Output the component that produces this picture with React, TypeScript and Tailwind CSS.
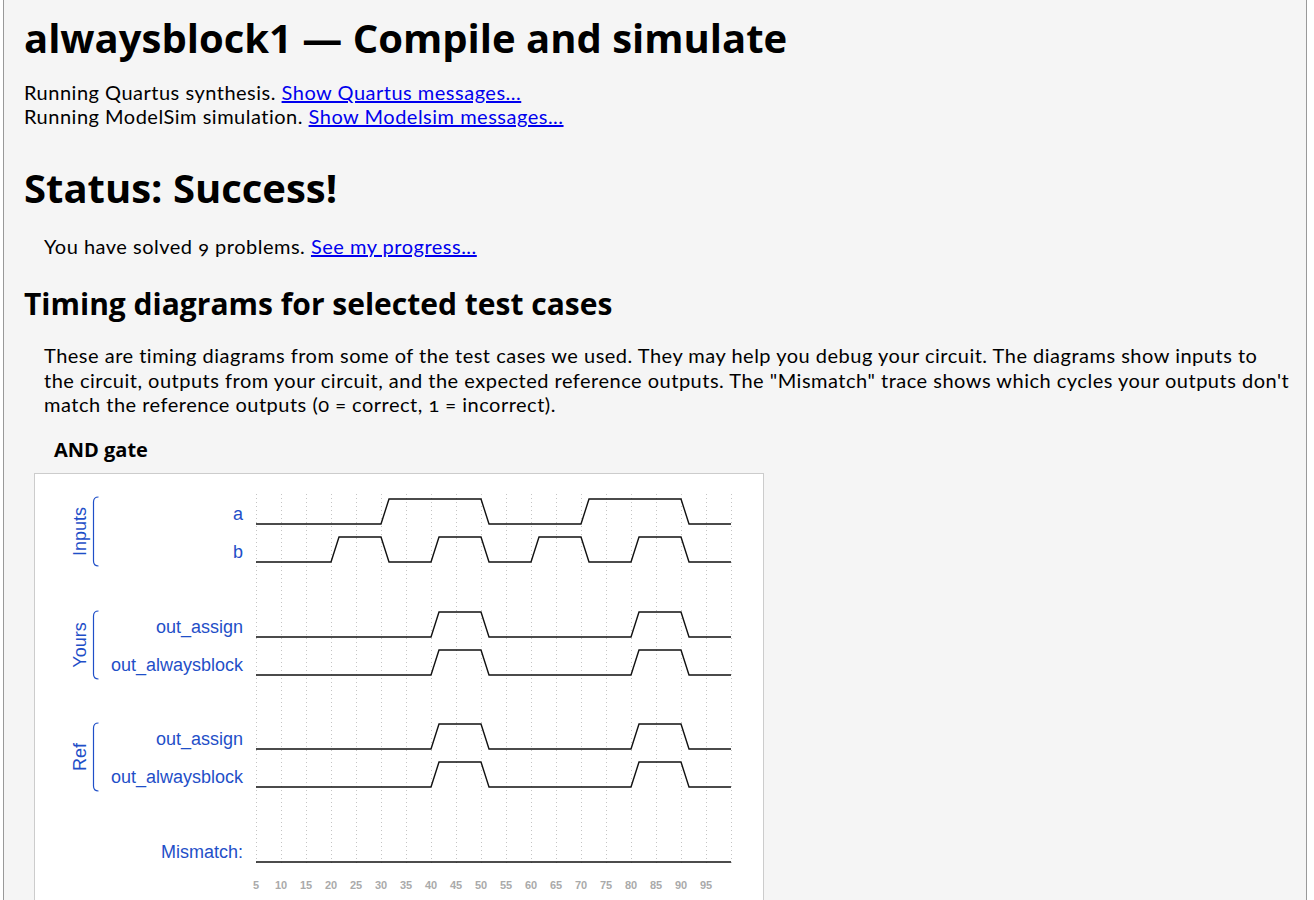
const BLUE = "#1f4fc8";

const x = (t: number) => 256 + (t - 5) * 5;

type Sig = { label: string; low: number; edges: number[] };

const hi = (low: number) => low - 25;

function wavePath(low: number, edges: number[]) {
  let level = 0;
  let d = `M${x(5)},${low}`;
  for (const t of edges) {
    const y0 = level ? hi(low) : low;
    const y1 = level ? low : hi(low);
    d += ` L${x(t)},${y0} L${x(t) + 8},${y1}`;
    level = 1 - level;
  }
  d += ` L${x(100)},${level ? hi(low) : low}`;
  return d;
}

const signals: Sig[] = [
  { label: "a", low: 524, edges: [30, 50, 70, 90] },
  { label: "b", low: 562, edges: [20, 30, 40, 50, 60, 70, 80, 90] },
  { label: "out_assign", low: 637, edges: [40, 50, 80, 90] },
  { label: "out_alwaysblock", low: 675, edges: [40, 50, 80, 90] },
  { label: "out_assign", low: 749, edges: [40, 50, 80, 90] },
  { label: "out_alwaysblock", low: 787, edges: [40, 50, 80, 90] },
  { label: "Mismatch:", low: 862, edges: [] },
];

const groups = [
  { name: "Inputs", top: 497, bottom: 566 },
  { name: "Yours", top: 611, bottom: 679 },
  { name: "Ref", top: 723, bottom: 791 },
];

const ticks = Array.from({ length: 19 }, (_, i) => 5 + i * 5);
const grid = Array.from({ length: 20 }, (_, i) => 5 + i * 5);

function TimingDiagram() {
  return (
    <svg
      width={728}
      height={440}
      viewBox="35 474 728 440"
      className="block"
      style={{ fontFamily: '"Liberation Sans", Arial, sans-serif' }}
    >
      {grid.map((t) => (
        <line
          key={t}
          x1={x(t) + 0.5}
          x2={x(t) + 0.5}
          y1={494}
          y2={866}
          stroke="#c4c4c4"
          strokeWidth={1}
          strokeDasharray="1 3"
        />
      ))}

      {groups.map((g) => {
        const mid = (g.top + g.bottom) / 2;
        return (
          <g key={g.name}>
            <path
              d={`M98.5,${g.top} Q93.5,${g.top} 93.5,${g.top + 5} L93.5,${g.bottom - 5} Q93.5,${g.bottom} 98.5,${g.bottom}`}
              fill="none"
              stroke={BLUE}
              strokeWidth={1.2}
            />
            <text
              x={0}
              y={0}
              fontSize={18}
              fill={BLUE}
              textAnchor="middle"
              transform={`translate(86 ${mid}) rotate(-90)`}
            >
              {g.name}
            </text>
          </g>
        );
      })}

      {signals.map((s, i) => (
        <g key={i}>
          <text x={243} y={s.low - 4} fontSize={18} fill={BLUE} textAnchor="end">
            {s.label}
          </text>
          <path d={wavePath(s.low, s.edges)} fill="none" stroke="#111" strokeWidth={1.4} />
        </g>
      ))}

      {ticks.map((t) => (
        <text
          key={t}
          x={x(t)}
          y={889}
          fontSize={11}
          fontWeight="bold"
          fill="#aaaaaa"
          textAnchor="middle"
        >
          {t}
        </text>
      ))}
    </svg>
  );
}

export default function App() {
  const body = { fontFamily: "Lato, 'Open Sans', sans-serif" };
  const head = { fontFamily: "'Open Sans', 'Liberation Sans', sans-serif" };
  return (
    <div className="min-h-screen bg-white">
      <div
        className="ml-[3px] min-h-screen w-[1304px] border-x border-[#999] bg-[#f5f5f5] px-[20px] pb-10 text-black oldstyle-nums"
        style={body}
      >
        <h1 className="pt-[14px] text-[40px] font-bold leading-[48px] lining-nums" style={head}>
          alwaysblock1 — Compile and simulate
        </h1>
        <div className="mt-[18px] text-[20px] leading-[24px] tracking-[0.5px]">
          <div>
            Running Quartus synthesis.{" "}
            <a href="#" className="text-[#0000ee] underline">
              Show Quartus messages...
            </a>
          </div>
          <div>
            Running ModelSim simulation.{" "}
            <a href="#" className="text-[#0000ee] underline">
              Show Modelsim messages...
            </a>
          </div>
        </div>

        <h2 className="mt-[36px] text-[40px] font-bold leading-[48px]" style={head}>
          Status: Success!
        </h2>
        <p className="mt-[22px] pl-[20px] text-[20px] leading-[24px] tracking-[0.5px]">
          You have solved 9 problems.{" "}
          <a href="#" className="text-[#0000ee] underline">
            See my progress...
          </a>
        </p>

        <h3 className="mt-[28px] text-[30px] font-bold leading-[36px]" style={head}>
          Timing diagrams for selected test cases
        </h3>
        <p className="mt-[21px] whitespace-nowrap pl-[20px] text-[20px] leading-[24.5px] tracking-[0.5px]">
          These are timing diagrams from some of the test cases we used. They may help you debug
          your circuit. The diagrams show inputs to
          <br />
          the circuit, outputs from your circuit, and the expected reference outputs. The
          "Mismatch" trace shows which cycles your outputs don't
          <br />
          match the reference outputs (0 = correct, 1 = incorrect).
        </p>

        <h4 className="mt-[21.5px] pl-[30px] text-[20px] font-bold leading-[24px]" style={head}>
          AND gate
        </h4>
        <div className="ml-[10px] mt-[11px] w-[730px] border border-[#ccc] bg-white">
          <TimingDiagram />
        </div>
      </div>
    </div>
  );
}
